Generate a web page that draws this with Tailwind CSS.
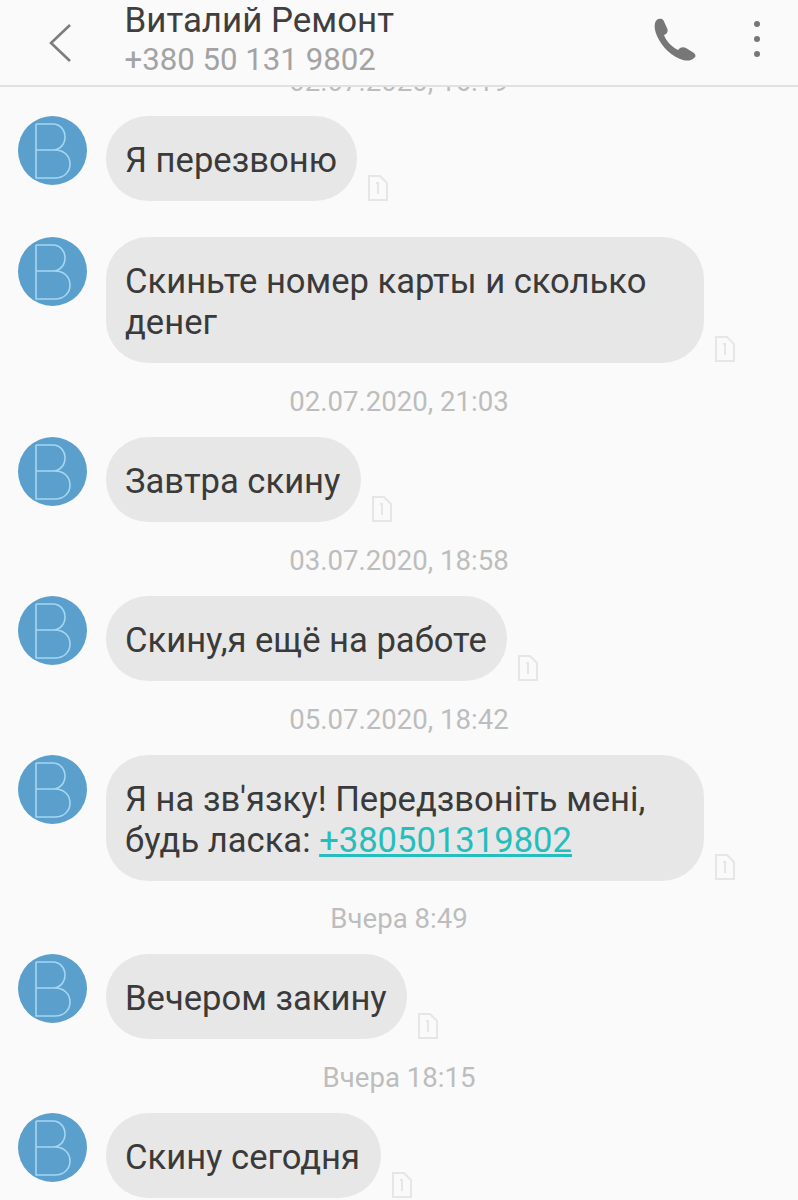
<!DOCTYPE html>
<html lang="ru">
<head>
<meta charset="utf-8">
<script src="https://cdn.jsdelivr.net/npm/@tailwindcss/browser@4"></script>
</head>
<body class="bg-[#fafafa] font-['Roboto',sans-serif]">
<div class="w-[798px] h-[1200px] overflow-hidden flex flex-col bg-[#fafafa] text-[#3a3a3a]">
  <header class="relative z-10 h-[87px] shrink-0 flex items-center bg-[#fafafa] border-b-2 border-[#e1e1e1]">
    <div class="w-[124.5px] shrink-0 pl-[48px]">
      <svg width="26" height="40" viewBox="0 0 26 40" fill="none" stroke="#7d7d7d" stroke-width="2.6"><path d="M22 2 3 20l19 18"/></svg>
    </div>
    <div class="flex-1 -mt-[5px]">
      <div class="text-[34.9px] leading-[40px] text-[#3f3f3f]">Виталий Ремонт</div>
      <div class="text-[31.2px] leading-[38px] text-[#a3a3a3]">+380 50 131 9802</div>
    </div>
    <svg class="mr-[101px] -mt-[8px]" width="44" height="46" viewBox="0 0 44 46"><path fill="#777" d="M2 7c1-4 4-5 7-4 2 1 3 5 5 9 1 2 1 4-1 6l-2 1c2 6 8 12 14 15l2-2c2-1 4-1 6 0l8 5c2 2 2 4 0 5-3 3-7 3-11 2C19 41 9 31 4 20 2 15 1 11 2 7Z"/></svg>
    <div class="absolute right-[38px] top-[21px] flex flex-col gap-[9px]">
      <div class="size-[6px] rounded-full bg-[#777]"></div>
      <div class="size-[6px] rounded-full bg-[#777]"></div>
      <div class="size-[6px] rounded-full bg-[#777]"></div>
    </div>
  </header>

  <main class="-mt-[26px] flex flex-col pl-[18px] text-[34.6px] leading-[41px]">
    <div class="h-[38px] flex items-center justify-center text-[27.6px] text-[#bdbdbd] pr-[18px] pt-[2px]">02.07.2020, 16:19</div>
    <div class="h-[17px]"></div>

    <div class="flex items-start">
      <div class="size-[69px] shrink-0 rounded-full bg-[#5b9fcc] flex items-center justify-center">
        <svg width="38" height="56" viewBox="0 0 38 56" fill="none" stroke="#a5d6f2" stroke-width="1.6"><path d="M2 1v54h19c9 0 15-6 15-14s-6-14-15-14H2m0 0h17c7 0 12-6 12-13S26 1 19 1H2"/></svg>
      </div>
      <div class="ml-[19px] pl-[19px] pr-[10px] pt-[24px] pb-[20px] rounded-[42px] bg-[#e7e7e7] w-[251px]">Я перезвоню</div>
      <svg class="ml-[9px] mt-[59px]" width="24" height="26" viewBox="0 0 24 26" fill="none" stroke="#e6e6e6" stroke-width="2"><path d="M3 1h11l7 7v17H3Z"/><path d="M10 8h2v11"/></svg>
    </div>
    <div class="h-[36px]"></div>

    <div class="flex items-start">
      <div class="size-[69px] shrink-0 rounded-full bg-[#5b9fcc] flex items-center justify-center">
        <svg width="38" height="56" viewBox="0 0 38 56" fill="none" stroke="#a5d6f2" stroke-width="1.6"><path d="M2 1v54h19c9 0 15-6 15-14s-6-14-15-14H2m0 0h17c7 0 12-6 12-13S26 1 19 1H2"/></svg>
      </div>
      <div class="ml-[19px] pl-[19px] pr-[10px] pt-[24px] pb-[20px] rounded-[42px] bg-[#e7e7e7] w-[598px]">Скиньте номер карты и сколько денег</div>
      <svg class="ml-[9px] mt-[99px]" width="24" height="26" viewBox="0 0 24 26" fill="none" stroke="#e6e6e6" stroke-width="2"><path d="M3 1h11l7 7v17H3Z"/><path d="M10 8h2v11"/></svg>
    </div>

    <div class="h-[74px] flex items-center justify-center text-[27.6px] text-[#bdbdbd] pr-[18px] pt-[2px]">02.07.2020, 21:03</div>

    <div class="flex items-start">
      <div class="size-[69px] shrink-0 rounded-full bg-[#5b9fcc] flex items-center justify-center">
        <svg width="38" height="56" viewBox="0 0 38 56" fill="none" stroke="#a5d6f2" stroke-width="1.6"><path d="M2 1v54h19c9 0 15-6 15-14s-6-14-15-14H2m0 0h17c7 0 12-6 12-13S26 1 19 1H2"/></svg>
      </div>
      <div class="ml-[19px] pl-[19px] pr-[10px] pt-[24px] pb-[20px] rounded-[42px] bg-[#e7e7e7] w-[255px]">Завтра скину</div>
      <svg class="ml-[9px] mt-[59px]" width="24" height="26" viewBox="0 0 24 26" fill="none" stroke="#e6e6e6" stroke-width="2"><path d="M3 1h11l7 7v17H3Z"/><path d="M10 8h2v11"/></svg>
    </div>

    <div class="h-[74px] flex items-center justify-center text-[27.6px] text-[#bdbdbd] pr-[18px] pt-[2px]">03.07.2020, 18:58</div>

    <div class="flex items-start">
      <div class="size-[69px] shrink-0 rounded-full bg-[#5b9fcc] flex items-center justify-center">
        <svg width="38" height="56" viewBox="0 0 38 56" fill="none" stroke="#a5d6f2" stroke-width="1.6"><path d="M2 1v54h19c9 0 15-6 15-14s-6-14-15-14H2m0 0h17c7 0 12-6 12-13S26 1 19 1H2"/></svg>
      </div>
      <div class="ml-[19px] pl-[19px] pr-[10px] pt-[24px] pb-[20px] rounded-[42px] bg-[#e7e7e7] w-[401px]">Скину,я ещё на работе</div>
      <svg class="ml-[9px] mt-[59px]" width="24" height="26" viewBox="0 0 24 26" fill="none" stroke="#e6e6e6" stroke-width="2"><path d="M3 1h11l7 7v17H3Z"/><path d="M10 8h2v11"/></svg>
    </div>

    <div class="h-[74px] flex items-center justify-center text-[27.6px] text-[#bdbdbd] pr-[18px] pt-[2px]">05.07.2020, 18:42</div>

    <div class="flex items-start">
      <div class="size-[69px] shrink-0 rounded-full bg-[#5b9fcc] flex items-center justify-center">
        <svg width="38" height="56" viewBox="0 0 38 56" fill="none" stroke="#a5d6f2" stroke-width="1.6"><path d="M2 1v54h19c9 0 15-6 15-14s-6-14-15-14H2m0 0h17c7 0 12-6 12-13S26 1 19 1H2"/></svg>
      </div>
      <div class="ml-[19px] pl-[19px] pr-[10px] pt-[24px] pb-[20px] rounded-[42px] bg-[#e7e7e7] w-[598px]">Я на зв'язку! Передзвоніть мені, будь ласка: <span class="text-[#25bdbd] underline">+380501319802</span></div>
      <svg class="ml-[9px] mt-[99px]" width="24" height="26" viewBox="0 0 24 26" fill="none" stroke="#e6e6e6" stroke-width="2"><path d="M3 1h11l7 7v17H3Z"/><path d="M10 8h2v11"/></svg>
    </div>

    <div class="h-[73px] flex items-center justify-center text-[27.6px] text-[#bdbdbd] pr-[18px] pt-[2px]">Вчера 8:49</div>

    <div class="flex items-start">
      <div class="size-[69px] shrink-0 rounded-full bg-[#5b9fcc] flex items-center justify-center">
        <svg width="38" height="56" viewBox="0 0 38 56" fill="none" stroke="#a5d6f2" stroke-width="1.6"><path d="M2 1v54h19c9 0 15-6 15-14s-6-14-15-14H2m0 0h17c7 0 12-6 12-13S26 1 19 1H2"/></svg>
      </div>
      <div class="ml-[19px] pl-[19px] pr-[10px] pt-[24px] pb-[20px] rounded-[42px] bg-[#e7e7e7] w-[301px]">Вечером закину</div>
      <svg class="ml-[9px] mt-[59px]" width="24" height="26" viewBox="0 0 24 26" fill="none" stroke="#e6e6e6" stroke-width="2"><path d="M3 1h11l7 7v17H3Z"/><path d="M10 8h2v11"/></svg>
    </div>

    <div class="h-[74px] flex items-center justify-center text-[27.6px] text-[#bdbdbd] pr-[18px] pt-[2px]">Вчера 18:15</div>

    <div class="flex items-start">
      <div class="size-[69px] shrink-0 rounded-full bg-[#5b9fcc] flex items-center justify-center">
        <svg width="38" height="56" viewBox="0 0 38 56" fill="none" stroke="#a5d6f2" stroke-width="1.6"><path d="M2 1v54h19c9 0 15-6 15-14s-6-14-15-14H2m0 0h17c7 0 12-6 12-13S26 1 19 1H2"/></svg>
      </div>
      <div class="ml-[19px] pl-[19px] pr-[10px] pt-[24px] pb-[20px] rounded-[42px] bg-[#e7e7e7] w-[275px]">Скину сегодня</div>
      <svg class="ml-[9px] mt-[59px]" width="24" height="26" viewBox="0 0 24 26" fill="none" stroke="#e6e6e6" stroke-width="2"><path d="M3 1h11l7 7v17H3Z"/><path d="M10 8h2v11"/></svg>
    </div>
  </main>
</div>
</body>
</html>
